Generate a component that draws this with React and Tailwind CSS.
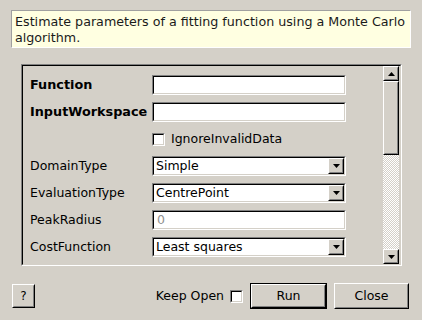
import React from "react";

const font = { fontFamily: '"DejaVu Sans", sans-serif' };

function Sunken({ className = "", children, inner = "bg-white" }) {
  return (
    <div className={`border border-t-[#808080] border-l-[#808080] border-b-white border-r-white ${className}`}>
      <div className={`w-full h-full border border-t-black border-l-black border-b-[#d4d0c8] border-r-[#d4d0c8] ${inner}`}>
        {children}
      </div>
    </div>
  );
}

function Raised({ className = "", children, inner = "" }) {
  return (
    <div className={`border border-t-white border-l-white border-b-black border-r-black bg-[#d4d0c8] ${className}`}>
      <div className={`w-full h-full border border-t-[#d4d0c8] border-l-[#d4d0c8] border-b-[#808080] border-r-[#808080] flex items-center justify-center ${inner}`}>
        {children}
      </div>
    </div>
  );
}

function Down() {
  return (
    <svg width="7" height="4" viewBox="0 0 7 4"><path d="M0 0H7L3.5 4Z" fill="#000" /></svg>
  );
}
function Up() {
  return (
    <svg width="7" height="4" viewBox="0 0 7 4"><path d="M0 4H7L3.5 0Z" fill="#000" /></svg>
  );
}

function Input({ value, gray }) {
  return (
    <Sunken className="w-[194px] h-[20px]">
      <div className={`px-[3px] leading-[16px] ${gray ? "text-[#909090]" : "text-black"}`}>{value}</div>
    </Sunken>
  );
}

function Select({ value }) {
  return (
    <Sunken className="w-[194px] h-[20px]">
      <div className="flex h-full items-center justify-between">
        <div className="px-[2px] leading-[16px]">{value}</div>
        <Raised className="w-[16px] h-[16px] mr-0">
          <Down />
        </Raised>
      </div>
    </Sunken>
  );
}

function Row({ label, bold, children }) {
  return (
    <div className="flex items-center h-[20px] shrink-0">
      <div className={`w-[122px] ${bold ? "font-bold text-[12.8px]" : ""}`}>{label}</div>
      {children}
    </div>
  );
}

function Checkbox() {
  return <Sunken className="w-[13px] h-[13px]" />;
}

export default function App() {
  return (
    <div style={font} className="w-[422px] h-[320px] bg-[#d4d0c8] text-[12.5px] text-black overflow-hidden flex flex-col">
      <div className="mt-[10px] ml-[11px] w-[400px] h-[38px] bg-[#ffffe1] border border-t-[#a0a0a0] border-l-[#a0a0a0] border-b-white border-r-white pl-[3px] pt-[3px] leading-[16px] text-[12.7px] text-[#1a1a1a]">
        Estimate parameters of a fitting function using a Monte Carlo algorithm.
      </div>

      <Sunken className="mt-[16px] ml-[21px] w-[381px] h-[202px]" inner="bg-[#d4d0c8]">
        <div className="flex h-full">
          <div className="flex-1 overflow-hidden pl-[7px] pt-[9px] flex flex-col gap-[7px]">
            <Row label="Function" bold><Input value="" /></Row>
            <Row label="InputWorkspace" bold><Input value="" /></Row>
            <Row label="">
              <div className="flex items-center gap-[6px]">
                <Checkbox />
                <span>IgnoreInvalidData</span>
              </div>
            </Row>
            <Row label="DomainType"><Select value="Simple" /></Row>
            <Row label="EvaluationType"><Select value="CentrePoint" /></Row>
            <Row label="PeakRadius"><Input value="0" gray /></Row>
            <Row label="CostFunction"><Select value="Least squares" /></Row>
            <Row label=""><Select value="" /></Row>
          </div>
          <div className="w-[16px] h-full flex flex-col mr-[1px]">
            <Raised className="w-[16px] h-[15px] shrink-0"><Up /></Raised>
            <Raised className="w-[16px] h-[74px] shrink-0" />
            <div className="flex-1 bg-[repeating-conic-gradient(#d4d0c8_0%_25%,#ffffff_0%_50%)] bg-[length:2px_2px]" />
            <Raised className="w-[16px] h-[15px] shrink-0"><Down /></Raised>
          </div>
        </div>
      </Sunken>

      <div className="mt-[17px] flex items-center">
        <Raised className="ml-[12px] w-[23px] h-[24px]"><span className="text-[12px]">?</span></Raised>
        <div className="ml-auto flex items-center">
          <span className="mr-[6px]">Keep Open</span>
          <Checkbox />
          <div className="ml-[7px] border border-black">
            <Raised className="w-[75px] h-[24px]"><span>Run</span></Raised>
          </div>
          <Raised className="ml-[7px] mr-[13px] w-[75px] h-[26px]"><span>Close</span></Raised>
        </div>
      </div>
    </div>
  );
}
